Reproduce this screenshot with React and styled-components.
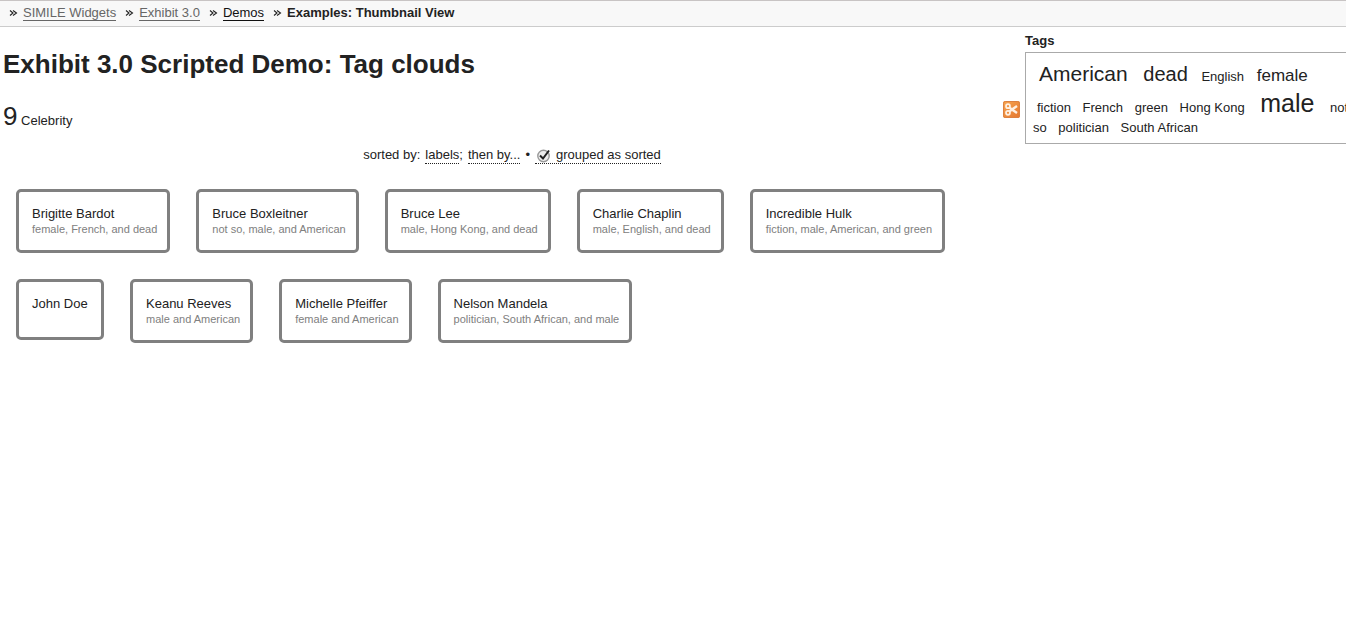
import React from "react";
import styled, { createGlobalStyle } from "styled-components";

const GlobalStyle = createGlobalStyle`
  * { box-sizing: border-box; }
  body {
    margin: 0;
    background: #fff;
    color: #222;
    font-family: "Liberation Sans", Arial, Helvetica, sans-serif;
    font-size: 13px;
    line-height: 16px;
    overflow-x: hidden;
  }
`;

const Breadcrumbs = styled.nav`
  background: #f8f8f8;
  border-top: 1px solid #c8c4c4;
  border-bottom: 1px solid #ccc;
  padding: 4px 9px 5px;
`;

const CrumbList = styled.ol`
  display: flex;
  gap: 9px;
  margin: 0;
  padding: 0;
  list-style: none;
`;

const Crumb = styled.li`
  display: flex;
  align-items: center;
  gap: 5px;
  color: #222;
  font-weight: ${(p) => (p.$current ? "bold" : "normal")};
`;

const CrumbLink = styled.a`
  color: ${(p) => (p.$dim ? "#666" : "#111")};
  line-height: 14px;
  text-decoration: none;
  border-bottom: 1px solid;
`;

const Page = styled.div`
  display: flex;
  align-items: flex-start;
  padding-left: 3px;
`;

const Main = styled.main`
  flex: 1;
  min-width: 0;
  padding-top: 20px;
`;

const Title = styled.h1`
  margin: 0;
  font-size: 26px;
  line-height: 34px;
`;

const Summary = styled.div`
  display: flex;
  justify-content: space-between;
  align-items: flex-start;
  margin-top: 19px;
  line-height: 32px;
`;

const Count = styled.span`
  font-size: 26px;
`;

const CopyButton = styled.button`
  display: block;
  width: 17px;
  height: 17px;
  margin: 1px 1px 0 0;
  padding: 0;
  border: 0;
  background: none;
`;

const SortBar = styled.div`
  display: flex;
  justify-content: center;
  gap: 5px;
  margin-top: 10px;
`;

const SortLink = styled.a`
  display: inline-block;
  color: #222;
  text-decoration: none;
  border-bottom: 1px dotted #222;
`;

const GroupToggle = styled.label`
  display: flex;
  align-items: center;
  gap: 4px;
  border-bottom: 1px dotted #222;
`;

const TickBox = styled.span`
  position: relative;
  width: 17px;
  height: 16px;

  input {
    appearance: none;
    display: block;
    width: 17px;
    height: 16px;
    margin: 0;
  }

  svg {
    position: absolute;
    inset: 0;
    pointer-events: none;
  }

  input:not(:checked) + svg .tick {
    display: none;
  }
`;

const Cards = styled.div`
  display: flex;
  flex-wrap: wrap;
  align-items: flex-start;
  gap: 26px;
  padding: 25px 13px;
`;

const Card = styled.article`
  min-width: 88px;
  min-height: 61px;
  padding: 14px 10px 13px 13px;
  border: 3px solid #808080;
  border-radius: 5px;
`;

const CardTags = styled.div`
  color: #808080;
  font-size: 11px;
  line-height: 15px;
`;

const Sidebar = styled.aside`
  width: 334px;
  flex: none;
  margin: 6px -13px 0 4px;
`;

const FacetTitle = styled.h2`
  margin: 0 0 3px;
  font-size: 13px;
  line-height: 16px;
`;

const Cloud = styled.div`
  border: 1px solid #aaa;
  padding: 7px 7px 6px;
  line-height: 1.3;
`;

const Tag = styled.a`
  color: #222;
  text-decoration: none;
  font-size: ${(p) => p.$size}px;
  margin: 0 ${(p) => Math.round(p.$size * 0.3)}px;
`;

const Chevrons = () => (
  <svg width="9" height="8" viewBox="0 0 9 8" fill="none" stroke="#222" strokeWidth="1.1" aria-hidden="true">
    <path d="M1 1.5 L4 4 L1 6.5 M4 1.5 L7.5 4 L4 6.5" />
  </svg>
);

const Scissors = () => (
  <svg width="17" height="17" viewBox="0 0 17 17" fill="none" aria-hidden="true">
    <defs>
      <linearGradient id="orange" x1="0" y1="0" x2="1" y2="1">
        <stop offset="0" stopColor="#f7a650" />
        <stop offset="1" stopColor="#e4762e" />
      </linearGradient>
    </defs>
    <rect width="17" height="17" rx="2" fill="url(#orange)" />
    <rect x="0.5" y="0.5" width="16" height="16" rx="2" stroke="#dc8040" />
    <g stroke="#fff0e2" strokeWidth="1.7">
      <circle cx="5" cy="5.2" r="2" />
      <circle cx="5" cy="11.8" r="2" />
      <path d="M6.5 6.6 L9 8.5 L14 12 M6.5 10.4 L9 8.5 L14 5" strokeWidth="2.4" />
    </g>
  </svg>
);

const crumbs = [
  { label: "SIMILE Widgets", dim: true },
  { label: "Exhibit 3.0", dim: true },
  { label: "Demos" },
];

const people = [
  ["Brigitte Bardot", "female, French, and dead"],
  ["Bruce Boxleitner", "not so, male, and American"],
  ["Bruce Lee", "male, Hong Kong, and dead"],
  ["Charlie Chaplin", "male, English, and dead"],
  ["Incredible Hulk", "fiction, male, American, and green"],
  ["John Doe", ""],
  ["Keanu Reeves", "male and American"],
  ["Michelle Pfeiffer", "female and American"],
  ["Nelson Mandela", "politician, South African, and male"],
];

const tags = [
  ["American", 21],
  ["dead", 20],
  ["English", 13],
  ["female", 17],
  ["fiction", 13],
  ["French", 13],
  ["green", 13],
  ["Hong Kong", 13],
  ["male", 25],
  ["not so", 13],
  ["politician", 13],
  ["South African", 13],
];

export default function App() {
  return (
    <>
      <GlobalStyle />
      <Breadcrumbs aria-label="Breadcrumb">
        <CrumbList>
          {crumbs.map((c) => (
            <Crumb key={c.label}>
              <Chevrons />
              <CrumbLink href="#" $dim={c.dim}>{c.label}</CrumbLink>
            </Crumb>
          ))}
          <Crumb $current>
            <Chevrons />
            Examples: Thumbnail View
          </Crumb>
        </CrumbList>
      </Breadcrumbs>
      <Page>
        <Main>
          <Title>Exhibit 3.0 Scripted Demo: Tag clouds</Title>
          <Summary>
            <span><Count>9</Count> Celebrity</span>
            <CopyButton type="button" aria-label="Copy"><Scissors /></CopyButton>
          </Summary>
          <SortBar>
            <span>sorted by:</span>
            <span><SortLink href="#">labels</SortLink>;</span>
            <SortLink href="#">then by...</SortLink>
            <span>•</span>
            <GroupToggle>
              <TickBox>
                <input type="checkbox" defaultChecked />
                <svg width="17" height="16" viewBox="0 0 17 16" fill="none" aria-hidden="true">
                  <circle cx="8.5" cy="9" r="5.7" fill="#eee" stroke="#999" strokeWidth="1.4" />
                  <path className="tick" d="M5 8.5 L8 11.5 L14 3.5" stroke="#222" strokeWidth="2" />
                </svg>
              </TickBox>
              grouped as sorted
            </GroupToggle>
          </SortBar>
          <Cards>
            {people.map(([name, desc]) => (
              <Card key={name}>
                <div>{name}</div>
                {desc && <CardTags>{desc}</CardTags>}
              </Card>
            ))}
          </Cards>
        </Main>
        <Sidebar>
          <FacetTitle>Tags</FacetTitle>
          <Cloud>
            {tags.map(([name, size]) => (
              <React.Fragment key={name}>
                <Tag href="#" $size={size}>
                  {name.split(" ").map((word, i) => (
                    <React.Fragment key={word}>
                      {i > 0 && " "}
                      <span>{word}</span>
                    </React.Fragment>
                  ))}
                </Tag>{" "}
              </React.Fragment>
            ))}
          </Cloud>
        </Sidebar>
      </Page>
    </>
  );
}
